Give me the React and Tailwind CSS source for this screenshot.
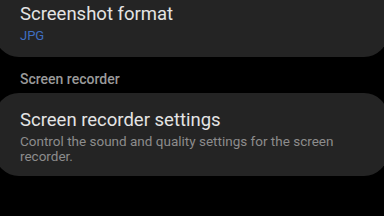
export default function App() {
    return (
        <div
            className="w-[384px] h-[216px] overflow-hidden bg-black flex flex-col"
            style={{ fontFamily: 'Roboto, "Noto Sans", sans-serif' }}
        >
            {/* Screenshot format (card cortado no topo) */}
            <div className="-ml-[5px] w-[393px] bg-[#242424] rounded-b-[24px] pt-[2px] pb-[13px] pl-[25px]">
                <p className="text-[18.5px] leading-[24px] text-[#e4e4e4]">Screenshot format</p>
                <p className="mt-[2px] text-[13px] leading-[16px] text-[#3f6ec2]">JPG</p>
            </div>

            {/* Cabeçalho */}
            <p className="mt-[13px] pl-[20px] text-[14px] leading-[18px] font-medium text-[#9a9a9a]">
                Screen recorder
            </p>

            {/* Screen recorder settings */}
            <div className="mt-[5px] -ml-[5px] w-[393px] bg-[#242424] rounded-[24px] pt-[15px] pb-[12px] pl-[25px] pr-[40px]">
                <p className="text-[18.5px] leading-[24px] text-[#e4e4e4]">Screen recorder settings</p>
                <p className="mt-[2px] text-[13.5px] leading-[15px] text-[#8c8c8c]">
                    Control the sound and quality settings for the screen recorder.
                </p>
            </div>
        </div>
    );
}
